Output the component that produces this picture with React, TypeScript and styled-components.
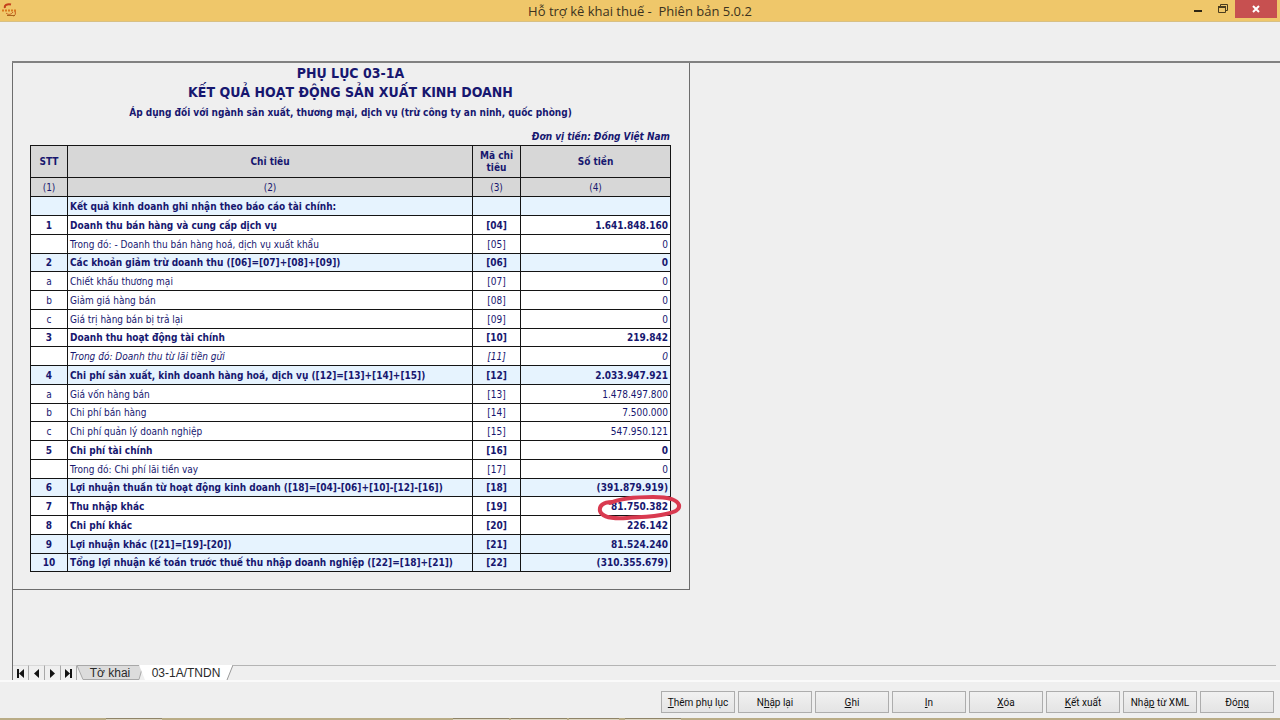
import React from "react";
import styled, { createGlobalStyle } from "styled-components";

const navy = "#17176f";

const GlobalStyle = createGlobalStyle`
  *, *::before, *::after { box-sizing: border-box; }
  body { margin: 0; background: #efefef; }
`;

const Window = styled.div`
  display: flex;
  flex-direction: column;
  min-height: 100vh;
  background: #efefef;
  font-family: "DejaVu Sans Condensed", "DejaVu Sans", sans-serif;
`;

const TitleBar = styled.header`
  position: relative;
  display: flex;
  justify-content: space-between;
  align-items: flex-start;
  height: 22px;
  padding-right: 3px;
  background: #efc76a;
  border-bottom: 1px solid #d8c084;
`;

const AppTitle = styled.h1`
  position: absolute;
  inset: 0;
  margin: 0;
  font: 400 13px/22px "Open Sans", "Noto Sans", sans-serif;
  text-align: center;
  white-space: pre;
  color: #3b3220;
  pointer-events: none;
`;

const WindowControls = styled.div`
  display: flex;
`;

const ControlButton = styled.button<{ $close?: boolean }>`
  display: flex;
  align-items: center;
  justify-content: center;
  width: ${(p) => (p.$close ? 42 : 25)}px;
  height: 18px;
  padding: 0;
  border: 0;
  background: ${(p) => (p.$close ? "#c75050" : "transparent")};
`;

const AppLogo = styled.svg`
  display: block;
  margin: 3px 0 0 2px;
`;

const Workspace = styled.main`
  display: flex;
  flex: 1;
  flex-direction: column;
  justify-content: space-between;
  margin: 39px 0 0 12px;
  border-top: 2px solid #818181;
`;

const SheetArea = styled.div`
  flex: 1;
  border-left: 1px solid #6d6d6d;
`;

const Sheet = styled.section`
  width: 677px;
  padding: 1px 18px 17px 17px;
  border-right: 1px solid #6d6d6d;
  border-bottom: 1px solid #6d6d6d;
  color: ${navy};
`;

const SheetTitle = styled.h2`
  margin: 0;
  font-size: 14px;
  line-height: 19px;
  text-align: center;
`;

const SheetNote = styled.p<{ $unit?: boolean }>`
  margin: 0;
  font-size: 10px;
  font-weight: 700;
  line-height: 18px;
  text-align: ${(p) => (p.$unit ? "right" : "center")};
  font-style: ${(p) => (p.$unit ? "italic" : "normal")};
  padding: ${(p) => (p.$unit ? "6px 1px 0 0" : "2px 0 0")};
`;

const Table = styled.table`
  width: 100%;
  table-layout: fixed;
  border-collapse: collapse;
  margin-top: -1px;
  font-size: 10px;
  line-height: 12px;
  background: #fff;
`;

const Col = styled.col<{ $w?: number }>`
  width: ${(p) => (p.$w ? p.$w + "px" : "auto")};
`;

const HeadCell = styled.th<{ $index?: boolean }>`
  height: ${(p) => (p.$index ? 19 : 32)}px;
  padding: 1px 4px 0;
  border: 1px solid #141414;
  background: #d7d7d7;
  font-weight: ${(p) => (p.$index ? 400 : 700)};
`;

type Tone = "bold" | "plain" | "italic";

const Row = styled.tr<{ $tone: Tone; $tint?: boolean }>`
  height: 19px;
  background: ${(p) => (p.$tint ? "#e6f3fe" : "#fff")};
  font-weight: ${(p) => (p.$tone === "bold" ? 700 : 400)};
  font-style: ${(p) => (p.$tone === "italic" ? "italic" : "normal")};
  &:nth-child(4n) { height: 18px; }
`;

const Cell = styled.td<{ $align?: "left" | "right" }>`
  position: relative;
  padding: 1px 2px 0;
  border: 1px solid #141414;
  text-align: ${(p) => p.$align ?? "center"};
  white-space: nowrap;
`;

const Marker = styled.svg`
  position: absolute;
  top: -3px;
  right: -13px;
  overflow: visible;
`;

const TabStrip = styled.nav`
  display: flex;
  height: 15px;
  margin-right: 4px;
  border-left: 1px solid #6d6d6d;
`;

const NavButton = styled.button`
  display: flex;
  align-items: center;
  justify-content: center;
  width: 16px;
  padding: 0;
  border: 0;
  border-right: 1px solid #a8a8a8;
  border-top: 1px solid #d8d8d8;
  background: #efefef;
`;

const Tab = styled.button<{ $active?: boolean }>`
  position: relative;
  width: ${(p) => (p.$active ? 94 : 66)}px;
  margin-left: ${(p) => (p.$active ? -4 : 0)}px;
  padding: 1px 0 0;
  border: 0;
  background: transparent;
  color: #2a2a2a;
  font: 12px/14px "Liberation Sans", Arial, sans-serif;
`;

const TabShape = styled.svg`
  position: absolute;
  inset: 0;
`;

const TabLabel = styled.span`
  position: relative;
`;

const TabFill = styled.div`
  flex: 1;
  border-top: 1px solid #b4b4b4;
`;

const ActionBar = styled.footer`
  display: flex;
  justify-content: flex-end;
  gap: 3px;
  padding: 9px 6px 5px;
  border-top: 2px solid #fafafa;
`;

const ActionButton = styled.button`
  width: 74px;
  height: 22px;
  padding: 1px 0 0;
  border: 1px solid #adadad;
  background: linear-gradient(#f1f1f1, #e4e4e4);
  color: #111;
  font: 10px/19px Roboto, "Liberation Sans", sans-serif;
  white-space: nowrap;
`;

const Taskbar = styled.div`
  display: flex;
  gap: 2px;
  height: 2px;
  padding-left: 106px;
  background: #b9ac86;
`;

const Task = styled.span<{ $w: number; $gap?: number }>`
  width: ${(p) => p.$w}px;
  margin-left: ${(p) => p.$gap ?? 0}px;
  border-top: 1px solid #8f8468;
  background: #dcd5bf;
`;

type Entry = [string, string, string, string, Tone, boolean?];

const entries: Entry[] = [
  ["", "Kết quả kinh doanh ghi nhận theo báo cáo tài chính:", "", "", "bold", true],
  ["1", "Doanh thu bán hàng và cung cấp dịch vụ", "[04]", "1.641.848.160", "bold"],
  ["", "Trong đó: - Doanh thu bán hàng hoá, dịch vụ xuất khẩu", "[05]", "0", "plain"],
  ["2", "Các khoản giảm trừ doanh thu ([06]=[07]+[08]+[09])", "[06]", "0", "bold", true],
  ["a", "Chiết khấu thương mại", "[07]", "0", "plain"],
  ["b", "Giảm giá hàng bán", "[08]", "0", "plain"],
  ["c", "Giá trị hàng bán bị trả lại", "[09]", "0", "plain"],
  ["3", "Doanh thu hoạt động tài chính", "[10]", "219.842", "bold"],
  ["", "Trong đó: Doanh thu từ lãi tiền gửi", "[11]", "0", "italic"],
  ["4", "Chi phí sản xuất, kinh doanh hàng hoá, dịch vụ ([12]=[13]+[14]+[15])", "[12]", "2.033.947.921", "bold", true],
  ["a", "Giá vốn hàng bán", "[13]", "1.478.497.800", "plain"],
  ["b", "Chi phí bán hàng", "[14]", "7.500.000", "plain"],
  ["c", "Chi phí quản lý doanh nghiệp", "[15]", "547.950.121", "plain"],
  ["5", "Chi phí tài chính", "[16]", "0", "bold"],
  ["", "Trong đó: Chi phí lãi tiền vay", "[17]", "0", "plain"],
  ["6", "Lợi nhuận thuần từ hoạt động kinh doanh ([18]=[04]-[06]+[10]-[12]-[16])", "[18]", "(391.879.919)", "bold", true],
  ["7", "Thu nhập khác", "[19]", "81.750.382", "bold"],
  ["8", "Chi phí khác", "[20]", "226.142", "bold"],
  ["9", "Lợi nhuận khác ([21]=[19]-[20])", "[21]", "81.524.240", "bold", true],
  ["10", "Tổng lợi nhuận kế toán trước thuế thu nhập doanh nghiệp ([22]=[18]+[21])", "[22]", "(310.355.679)", "bold", true],
];

// Each label is split into the text before, in and after its underlined access key.
const actions: [string, string, string][] = [
  ["", "T", "hêm phụ lục"],
  ["N", "h", "ập lại"],
  ["", "G", "hi"],
  ["", "I", "n"],
  ["", "X", "óa"],
  ["", "K", "ết xuất"],
  ["Nhậ", "p", " từ XML"],
  ["Đó", "ng", ""],
];

const navIcons: [string, string][] = [
  ["Trang đầu", "M1 0h2v9H1zM8 0v9L3 4.500z"],
  ["Trang trước", "M7 0v9L2 4.500z"],
  ["Trang sau", "M2 0v9l5-4.500z"],
  ["Trang cuối", "M1 0v9l5-4.500zM6 0h2v9H6z"],
];

const CircleMark = () => (
  <Marker width="86" height="28" viewBox="0 0 86 28" fill="none" stroke="#d93a50" strokeWidth="4" strokeLinecap="round" aria-hidden="true">
    <path d="M15 8C6 8 2 12 3 17c2 6 13 8 27 7 13-1 27-1 39-4 9-2 14-4 13-9C80 5 70 3 56 3 42 3 24 4 13 9" />
  </Marker>
);

export default function App() {
  return (
    <Window>
      <GlobalStyle />
      <TitleBar>
        <AppLogo width="17" height="15" viewBox="0 0 17 15" fill="none" aria-hidden="true">
          <path d="M9 1.500C5 .5 2 2.500 3 5" stroke="#c4401c" strokeWidth="2" />
          <path d="M0 7.500h15" stroke="#d97a1c" strokeWidth="2" strokeDasharray="2 1" />
          <path d="M4 10c2 2 5 2 7-1M13 8c1 3 0 5-2 5" stroke="#c65a1c" strokeWidth="1" />
          <path d="M5 12.500h8" stroke="#a8641c" strokeWidth="1" />
        </AppLogo>
        <AppTitle>{"Hỗ trợ kê khai thuế -  Phiên bản 5.0.2"}</AppTitle>
        <WindowControls>
          <ControlButton aria-label="Thu nhỏ">
            <svg width="8" height="12" viewBox="0 0 8 12"><path d="M0 7h8v2H0z" fill="#2e2614" /></svg>
          </ControlButton>
          <ControlButton aria-label="Khôi phục">
            <svg width="10" height="10" viewBox="0 0 10 10" fill="none" stroke="#4a3d1e">
              <path d="M2.500 2V.5h7v6H8M.5 3.500h7v5h-7z" /><path d="M0 3h8" strokeWidth="2" />
            </svg>
          </ControlButton>
          <ControlButton $close aria-label="Đóng cửa sổ">
            <svg width="8" height="8" viewBox="0 0 8 8" stroke="#fff" strokeWidth="2"><path d="M1 1l6 6M7 1L1 7" /></svg>
          </ControlButton>
        </WindowControls>
      </TitleBar>

      <Workspace>
        <SheetArea>
          <Sheet>
            <SheetTitle>PHỤ LỤC 03-1A<br />KẾT QUẢ HOẠT ĐỘNG SẢN XUẤT KINH DOANH</SheetTitle>
            <SheetNote>Áp dụng đối với ngành sản xuất, thương mại, dịch vụ (trừ công ty an ninh, quốc phòng)</SheetNote>
            <SheetNote $unit>Đơn vị tiền: Đồng Việt Nam</SheetNote>
            <Table>
              <colgroup><Col $w={37} /><Col /><Col $w={48} /><Col $w={150} /></colgroup>
              <thead>
                <tr>
                  <HeadCell scope="col">STT</HeadCell>
                  <HeadCell scope="col">Chỉ tiêu</HeadCell>
                  <HeadCell scope="col">Mã chỉ tiêu</HeadCell>
                  <HeadCell scope="col">Số tiền</HeadCell>
                </tr>
                <tr>
                  {["(1)", "(2)", "(3)", "(4)"].map((n) => <HeadCell key={n} $index>{n}</HeadCell>)}
                </tr>
              </thead>
              <tbody>
                {entries.map(([no, label, code, amount, tone, tint], i) => (
                  <Row key={i} $tone={tone} $tint={tint}>
                    <Cell>{no}</Cell>
                    <Cell $align="left">{label}</Cell>
                    <Cell>{code}</Cell>
                    <Cell $align="right">{amount}{code === "[19]" && <CircleMark />}</Cell>
                  </Row>
                ))}
              </tbody>
            </Table>
          </Sheet>
        </SheetArea>
        <TabStrip>
          {navIcons.map(([name, d]) => (
            <NavButton key={name} aria-label={name}>
              <svg width="9" height="9" viewBox="0 0 9 9"><path d={d} fill="#111" /></svg>
            </NavButton>
          ))}
          <Tab>
            <TabShape width="66" height="15" viewBox="0 0 66 15"><path d="M0 .5h66l-4 14H6z" fill="#dcdcdc" stroke="#a8a8a8" /></TabShape>
            <TabLabel>Tờ khai</TabLabel>
          </Tab>
          <Tab $active>
            <TabShape width="94" height="15" viewBox="0 0 94 15"><path d="M0 0h94l-6 15H6z" fill="#fff" /><path d="M94 0l-6 15" stroke="#999" /></TabShape>
            <TabLabel>03-1A/TNDN</TabLabel>
          </Tab>
          <TabFill />
        </TabStrip>
      </Workspace>

      <ActionBar>
        {actions.map(([before, accessKey, after]) => (
          <ActionButton key={before + accessKey + after}>{before}<u>{accessKey}</u>{after}</ActionButton>
        ))}
      </ActionBar>
      <Taskbar>
        <Task $w={56} /><Task $w={56} $gap={289} /><Task $w={56} /><Task $w={50} /><Task $w={56} $gap={4} />
      </Taskbar>
    </Window>
  );
}
